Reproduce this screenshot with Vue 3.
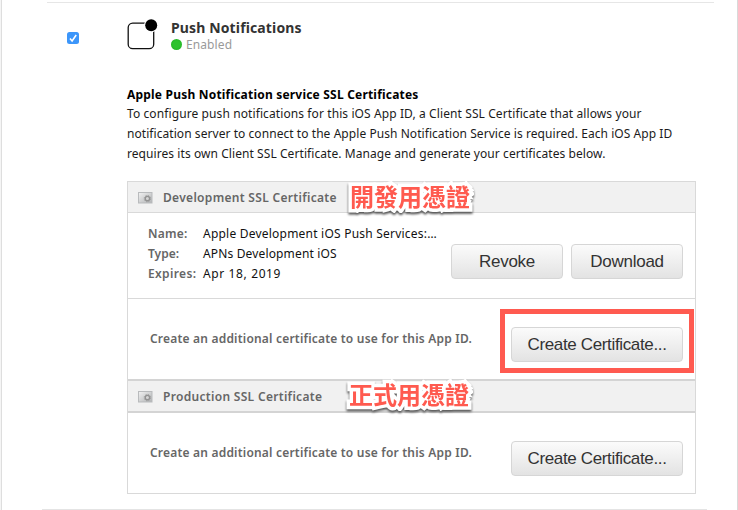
<script setup>
const intro = [
  'To configure push notifications for this iOS App ID, a Client SSL Certificate that allows your',
  'notification server to connect to the Apple Push Notification Service is required. Each iOS App ID',
  'requires its own Client SSL Certificate. Manage and generate your certificates below.',
]
const details = [
  { label: 'Name:', value: 'Apple Development iOS Push Services:…', kind: 'name' },
  { label: 'Type:', value: 'APNs Development iOS', kind: 'type' },
  { label: 'Expires:', value: 'Apr 18, 2019', kind: 'date' },
]
const sections = [
  { title: 'Development SSL Certificate', note: '開發用憑證', details, marked: true },
  { title: 'Production SSL Certificate', note: '正式用憑證', details: null, marked: false },
]
</script>

<template>
  <main class="page">
    <section class="service">
      <header class="service-head">
        <span class="checkbox">
          <svg width="12" height="12" viewBox="0 0 12 12"><path d="M3 6.4 5.1 9 9.2 3" fill="none" stroke="#fff" stroke-width="1.6" /></svg>
        </span>
        <svg class="push-icon" width="32" height="32" viewBox="0 0 32 32">
          <rect x="1.2" y="5.1" width="25.5" height="25.6" rx="4.5" fill="#fff" stroke="#111" stroke-width="1.3" />
          <circle cx="24.2" cy="7.3" r="7" fill="#fff" />
          <circle cx="24.2" cy="7.3" r="6" fill="#000" />
        </svg>
        <div class="service-title">
          <h2>Push Notifications</h2>
          <p><i class="dot"></i><span>Enabled</span></p>
        </div>
      </header>

      <div class="intro">
        <h3>Apple Push Notification service SSL Certificates</h3>
        <p v-for="(line, i) in intro" :key="i" :class="'line' + i">{{ line }}</p>
      </div>

      <div class="certs">
        <template v-for="s in sections" :key="s.title">
          <div class="cert-head" :class="{ second: !s.details }">
            <svg class="cert-icon" width="15" height="12" viewBox="0 0 15 12">
              <defs>
                <linearGradient id="paper" x1="0" y1="0" x2="1" y2="1">
                  <stop offset="0" stop-color="#f2f2f2" /><stop offset="1" stop-color="#b0b2b4" />
                </linearGradient>
              </defs>
              <rect x=".5" y=".5" width="13.5" height="10.5" fill="url(#paper)" stroke="#b9bbbd" />
              <circle cx="9.4" cy="6.6" r="2.2" fill="#d4d4d4" stroke="#929292" stroke-width="1.4" />
              <circle cx="9.4" cy="6.6" r="3.2" fill="none" stroke="#989898" stroke-width=".9" stroke-dasharray="1.3 1.21" />
            </svg>
            <span class="cert-title">{{ s.title }}</span>
            <span class="note">{{ s.note }}</span>
          </div>
          <div v-if="s.details" class="cert-info">
            <dl>
              <div v-for="d in s.details" :key="d.label" :class="d.kind">
                <dt><span>{{ d.label }}</span></dt>
                <dd>{{ d.value }}</dd>
              </div>
            </dl>
            <button class="small revoke"><span>Revoke</span></button>
            <button class="small download"><span>Download</span></button>
          </div>
          <div class="cert-create" :class="{ last: !s.details }">
            <p>Create an additional certificate to use for this App ID.</p>
            <div class="action">
              <button class="large"><span>Create Certificate...</span></button>
              <i v-if="s.marked" class="marker"></i>
            </div>
          </div>
        </template>
      </div>
    </section>
  </main>
</template>

<style>
body { margin: 0; background: #fff; overflow: hidden; }
</style>

<style scoped>
* { box-sizing: border-box; }
h2, h3, p, dl, dt, dd { margin: 0; }
.page {
  width: 738px; height: 510px; overflow: hidden;
  background: linear-gradient(#e4e4e4, #e4e4e4) 42px 509px / 665px 1px no-repeat, #fff;
  border-right: 1px solid #d9d9d9;
  box-shadow: inset 1px 0 #f5f5f5, inset 2px 0 #dedede;
  font-family: "Noto Sans", "Open Sans", sans-serif; font-size: 12px; color: #1b1b1b;
  white-space: nowrap;
}
.service { margin-left: 47px; width: 667px; padding-top: 2px; }
.service-head { border-top: 1px solid #e6e6e6; height: 80px; display: flex; align-items: flex-start; }
.checkbox { margin: 29px 0 0 20px; width: 12px; height: 12px; border-radius: 2.5px; background: #3c96fa; flex: none; }
.checkbox svg { display: block; }
.push-icon { margin: 15px 0 0 48px; flex: none; }
.service-title { margin: 15px 0 0 12px; }
h2 { font-size: 14px; line-height: 20px; font-weight: 700; color: #333; letter-spacing: .13px; }
.service-title p { display: flex; align-items: center; height: 13px; color: #9a9a9a; letter-spacing: .1px; }
.dot { width: 11px; height: 11px; border-radius: 50%; background: radial-gradient(#2dc22d 40%, #1fae1f); margin-right: 4px; }
.intro { margin-left: 80px; height: 99px; padding-top: 3px; line-height: 20px; }
.intro p { line-height: 20px; }
.line0 { letter-spacing: .1px; }
.line1 { letter-spacing: .06px; }
.line2 { letter-spacing: .07px; }
h3 { font-size: 12px; line-height: 19px; font-weight: 700; color: #000; letter-spacing: .2px; }
.certs { margin-left: 80px; width: 569px; height: 313px; border: 1px solid #d9d9d9; }
.cert-head { height: 31px; background: #f1f1f1; border-bottom: 1px solid #d9d9d9; display: flex; align-items: center; padding-left: 10px; position: relative; }
.cert-head.second { height: 34px; border-top: 2px solid #d4d4d4; border-bottom: 2px solid #d4d4d4; }
.cert-icon { flex: none; margin-top: 1px; }
.cert-title { margin-left: 10px; color: #666; font-weight: 600; letter-spacing: .31px; }
.note {
  position: absolute; left: 222px; top: -3px; line-height: 34px;
  font-family: "Noto Sans CJK TC", sans-serif; font-weight: 700; font-size: 24px; color: #ff5a4f;
  -webkit-text-stroke: 7px #fff; paint-order: stroke fill;
  filter: drop-shadow(0 2px 1px #555);
}
.second .note { left: 221px; top: -4px; }
.cert-info { height: 86px; border-bottom: 1px solid #d9d9d9; display: flex; padding-right: 12px; }
dl { width: 323px; padding: 11px 0 0 20px; flex: none; color: #111; }
dl div { display: flex; height: 20px; line-height: 20px; }
dt { width: 55px; flex: none; color: #666; font-weight: 600; }
.name dt { letter-spacing: .2px; }
.date dt { letter-spacing: .35px; }
.name dd { letter-spacing: .22px; }
.type dd { letter-spacing: .15px; }
.date dd { letter-spacing: .62px; }
button {
  height: 35px; padding: 0; border: 1px solid #d6d6d6; border-radius: 4px;
  background: linear-gradient(#fbfbfb, #e3e3e3); color: #333;
  font: 17px/33px "Liberation Sans", Arial, sans-serif;
}
.small { width: 112px; margin-top: 31px; flex: none; letter-spacing: -.25px; }
.download { margin-left: 8px; }
.large { width: 172px; display: block; letter-spacing: -.35px; }
.cert-create { height: 80px; display: flex; justify-content: space-between; align-items: center; padding: 0 12px 2px 22px; color: #666; font-weight: 600; letter-spacing: .2px; }
.action { position: relative; margin-top: 12px; }
.marker { position: absolute; left: -11px; top: -18px; width: 194px; height: 64px; border: 5px solid #ff5a50; }
</style>
